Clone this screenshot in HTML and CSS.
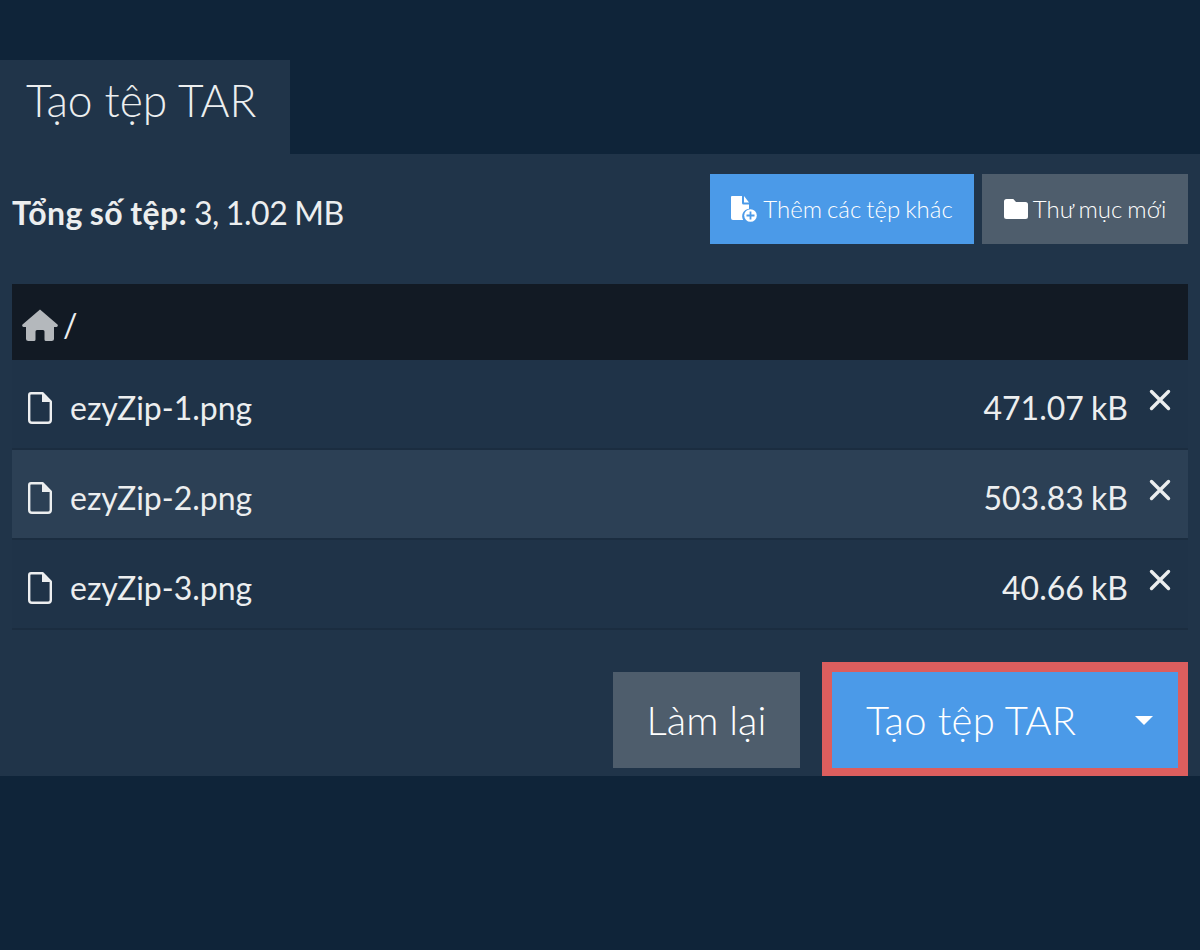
FILE: index.html
```html
<!DOCTYPE html>
<html lang="vi">
<head>
  <meta charset="UTF-8">
  <title>Tạo tệp TAR</title>
  <link rel="stylesheet" href="styles.css">
</head>
<body>
  <!-- Tab heading -->
  <div class="tab">Tạo tệp TAR</div>

  <div class="panel">
    <!-- Totals and add buttons -->
    <div class="toolbar">
      <div class="totals"><b>Tổng số tệp:</b> 3, 1.02 MB</div>
      <div class="toolbar-buttons">
        <button class="btn btn-blue btn-small btn-add">
          <svg class="icon-add" viewBox="0 0 28 26" width="28" height="26">
            <path fill="#fff" d="M1 0h10v7a1.500 1.500 0 0 0 1.500 1.500H18v4.200A7.500 7.500 0 0 0 12.200 24H2a2 2 0 0 1-2-2V1a1 1 0 0 1 1-1z"/>
            <path fill="#fff" d="M13 0l5 6.500h-5z"/>
            <circle cx="19.500" cy="19.500" r="6.300" fill="#fff"/>
            <path stroke="#4b9ae8" stroke-width="1.800" d="M19.500 15.500v8M15.500 19.500h8"/>
          </svg>
          <span class="btn-label">Thêm các tệp khác</span>
        </button>
        <button class="btn btn-gray btn-small btn-folder">
          <svg class="icon-folder" viewBox="0 0 24 20" width="24" height="20">
            <path fill="#fff" d="M2.500 0h6.800l2.700 3h9.500A2.500 2.500 0 0 1 24 5.500v12a2.500 2.500 0 0 1-2.500 2.500h-19A2.500 2.500 0 0 1 0 17.500v-15A2.500 2.500 0 0 1 2.500 0z"/>
          </svg>
          <span class="btn-label">Thư mục mới</span>
        </button>
      </div>
    </div>

    <!-- File list -->
    <div class="path-bar">
      <svg class="icon-home" viewBox="0 0 36 32" width="36" height="32">
        <path fill="#b4b8bc" d="M18 0.500 35.200 15.300a1.500 1.500 0 0 1-1 2.700H32v11.500a2.500 2.500 0 0 1-2.500 2.500H24a1.500 1.500 0 0 1-1.500-1.500v-8a1.500 1.500 0 0 0-1.500-1.500h-6a1.500 1.500 0 0 0-1.500 1.500v8A1.500 1.500 0 0 1 12 32H6.500A2.500 2.500 0 0 1 4 29.500V18H1.800a1.500 1.500 0 0 1-1-2.700z"/>
      </svg>
      <span class="slash">/</span>
    </div>
    <div class="file-row">
      <svg class="icon-file" viewBox="0 0 24 32" width="24" height="32"><path fill="none" stroke="#eceeef" stroke-width="2.400" stroke-linejoin="round" d="M3 1.200h11.500L22.800 9.500V28a2.800 2.800 0 0 1-2.800 2.800H4A2.800 2.800 0 0 1 1.200 28V3A1.800 1.800 0 0 1 3 1.200z"/><path fill="#eceeef" d="M14 1.200 22.800 10H14z"/></svg>
      <span class="file-name">ezyZip-1.png</span>
      <span class="file-size">471.07 kB</span>
      <svg class="icon-close" viewBox="0 0 22 22" width="22" height="22"><path stroke="#eceeef" stroke-width="3.400" stroke-linecap="round" d="M2.500 2.500l17 17M19.500 2.500l-17 17"/></svg>
    </div>
    <div class="file-row file-row-hover">
      <svg class="icon-file" viewBox="0 0 24 32" width="24" height="32"><path fill="none" stroke="#eceeef" stroke-width="2.400" stroke-linejoin="round" d="M3 1.200h11.500L22.800 9.500V28a2.800 2.800 0 0 1-2.800 2.800H4A2.800 2.800 0 0 1 1.200 28V3A1.800 1.800 0 0 1 3 1.200z"/><path fill="#eceeef" d="M14 1.200 22.800 10H14z"/></svg>
      <span class="file-name">ezyZip-2.png</span>
      <span class="file-size">503.83 kB</span>
      <svg class="icon-close" viewBox="0 0 22 22" width="22" height="22"><path stroke="#eceeef" stroke-width="3.400" stroke-linecap="round" d="M2.500 2.500l17 17M19.500 2.500l-17 17"/></svg>
    </div>
    <div class="file-row">
      <svg class="icon-file" viewBox="0 0 24 32" width="24" height="32"><path fill="none" stroke="#eceeef" stroke-width="2.400" stroke-linejoin="round" d="M3 1.200h11.500L22.800 9.500V28a2.800 2.800 0 0 1-2.800 2.800H4A2.800 2.800 0 0 1 1.200 28V3A1.800 1.800 0 0 1 3 1.200z"/><path fill="#eceeef" d="M14 1.200 22.800 10H14z"/></svg>
      <span class="file-name">ezyZip-3.png</span>
      <span class="file-size">40.66 kB</span>
      <svg class="icon-close" viewBox="0 0 22 22" width="22" height="22"><path stroke="#eceeef" stroke-width="3.400" stroke-linecap="round" d="M2.500 2.500l17 17M19.500 2.500l-17 17"/></svg>
    </div>

    <!-- Bottom actions -->
    <div class="actions">
      <button class="btn btn-gray btn-large btn-reset">Làm lại</button>
      <div class="highlight">
        <button class="btn btn-blue btn-large btn-create">
          <span class="create-label">Tạo tệp TAR</span>
          <span class="caret"></span>
        </button>
      </div>
    </div>
  </div>
</body>
</html>
```

FILE: styles.css
```css
/* Page */
html, body {
  margin: 0;
  padding: 0;
}

body {
  height: 950px;
  overflow: hidden;
  background-color: #0f2439;
  font-family: "Lato", "Liberation Sans", sans-serif;
  color: #eceeef;
}

/* Tab heading */
.tab {
  box-sizing: border-box;
  width: 290px;
  height: 94px;
  margin-top: 60px;
  padding: 12px 0 0 26px;
  background-color: #203449;
  font-size: 44.3px;
  font-weight: 300;
  line-height: 56px;
}

/* Main panel */
.panel {
  box-sizing: border-box;
  height: 622px;
  padding: 20px 12px 0;
  background-color: #203449;
}

.toolbar {
  display: flex;
  justify-content: space-between;
  align-items: center;
  height: 70px;
  margin-bottom: 40px;
}

.totals {
  padding-top: 8px;
  font-size: 32px;
  line-height: 40px;
  letter-spacing: -0.400px;
  word-spacing: -1px;
}

.totals b {
  letter-spacing: 0.400px;
}

.toolbar-buttons {
  display: flex;
  gap: 8px;
}

/* Buttons */
.btn {
  display: flex;
  align-items: center;
  justify-content: center;
  border: none;
  padding: 0;
  color: #fff;
  font-family: inherit;
  font-weight: 300;
}

.btn-blue {
  background-color: #4b9ae8;
}

.btn-gray {
  background-color: #4e5d6c;
}

.btn-small {
  height: 70px;
  font-size: 24px;
  word-spacing: -1.500px;
}

.btn-label {
  margin-top: -2px;
}

.btn-add {
  width: 264px;
}

.btn-folder {
  width: 206px;
}

.icon-add {
  margin-right: 4px;
}

.icon-folder {
  margin-right: 5px;
}

/* File list */
.path-bar {
  display: flex;
  align-items: center;
  height: 76px;
  padding-left: 10px;
  background-color: #121a24;
}

.icon-home {
  margin-top: 6px;
}

.slash {
  margin: 4px 0 0 5px;
  font-size: 32px;
}

.file-row {
  display: flex;
  align-items: center;
  box-sizing: border-box;
  height: 90px;
  padding-left: 16px;
  background-color: #1f3348;
  border-bottom: 2px solid #1b2d40;
  font-size: 32px;
  word-spacing: -1px;
}

.file-row-hover {
  background-color: #2c4055;
}

.icon-file {
  margin-top: 8px;
}

.file-name {
  margin: 6px 0 0 18px;
}

.file-size {
  margin: 6px 0 0 auto;
}

.icon-close {
  margin: -8px 17px 0 21px;
}

/* Bottom actions */
.actions {
  display: flex;
  justify-content: flex-end;
  align-items: flex-start;
  gap: 22px;
  margin-top: 32px;
}

.btn-large {
  height: 96px;
  font-size: 40px;
}

.btn-reset {
  width: 187px;
  margin-top: 10px;
}

.highlight {
  border: 10px solid #dc5e5e;
  border-bottom-width: 8px;
}

.btn-create {
  justify-content: flex-start;
  width: 346px;
  padding-left: 34px;
}

.create-label {
  letter-spacing: 0.200px;
}

.caret {
  width: 0;
  height: 0;
  margin-left: 59px;
  border-left: 9px solid transparent;
  border-right: 9px solid transparent;
  border-top: 9px solid #fff;
}
```
